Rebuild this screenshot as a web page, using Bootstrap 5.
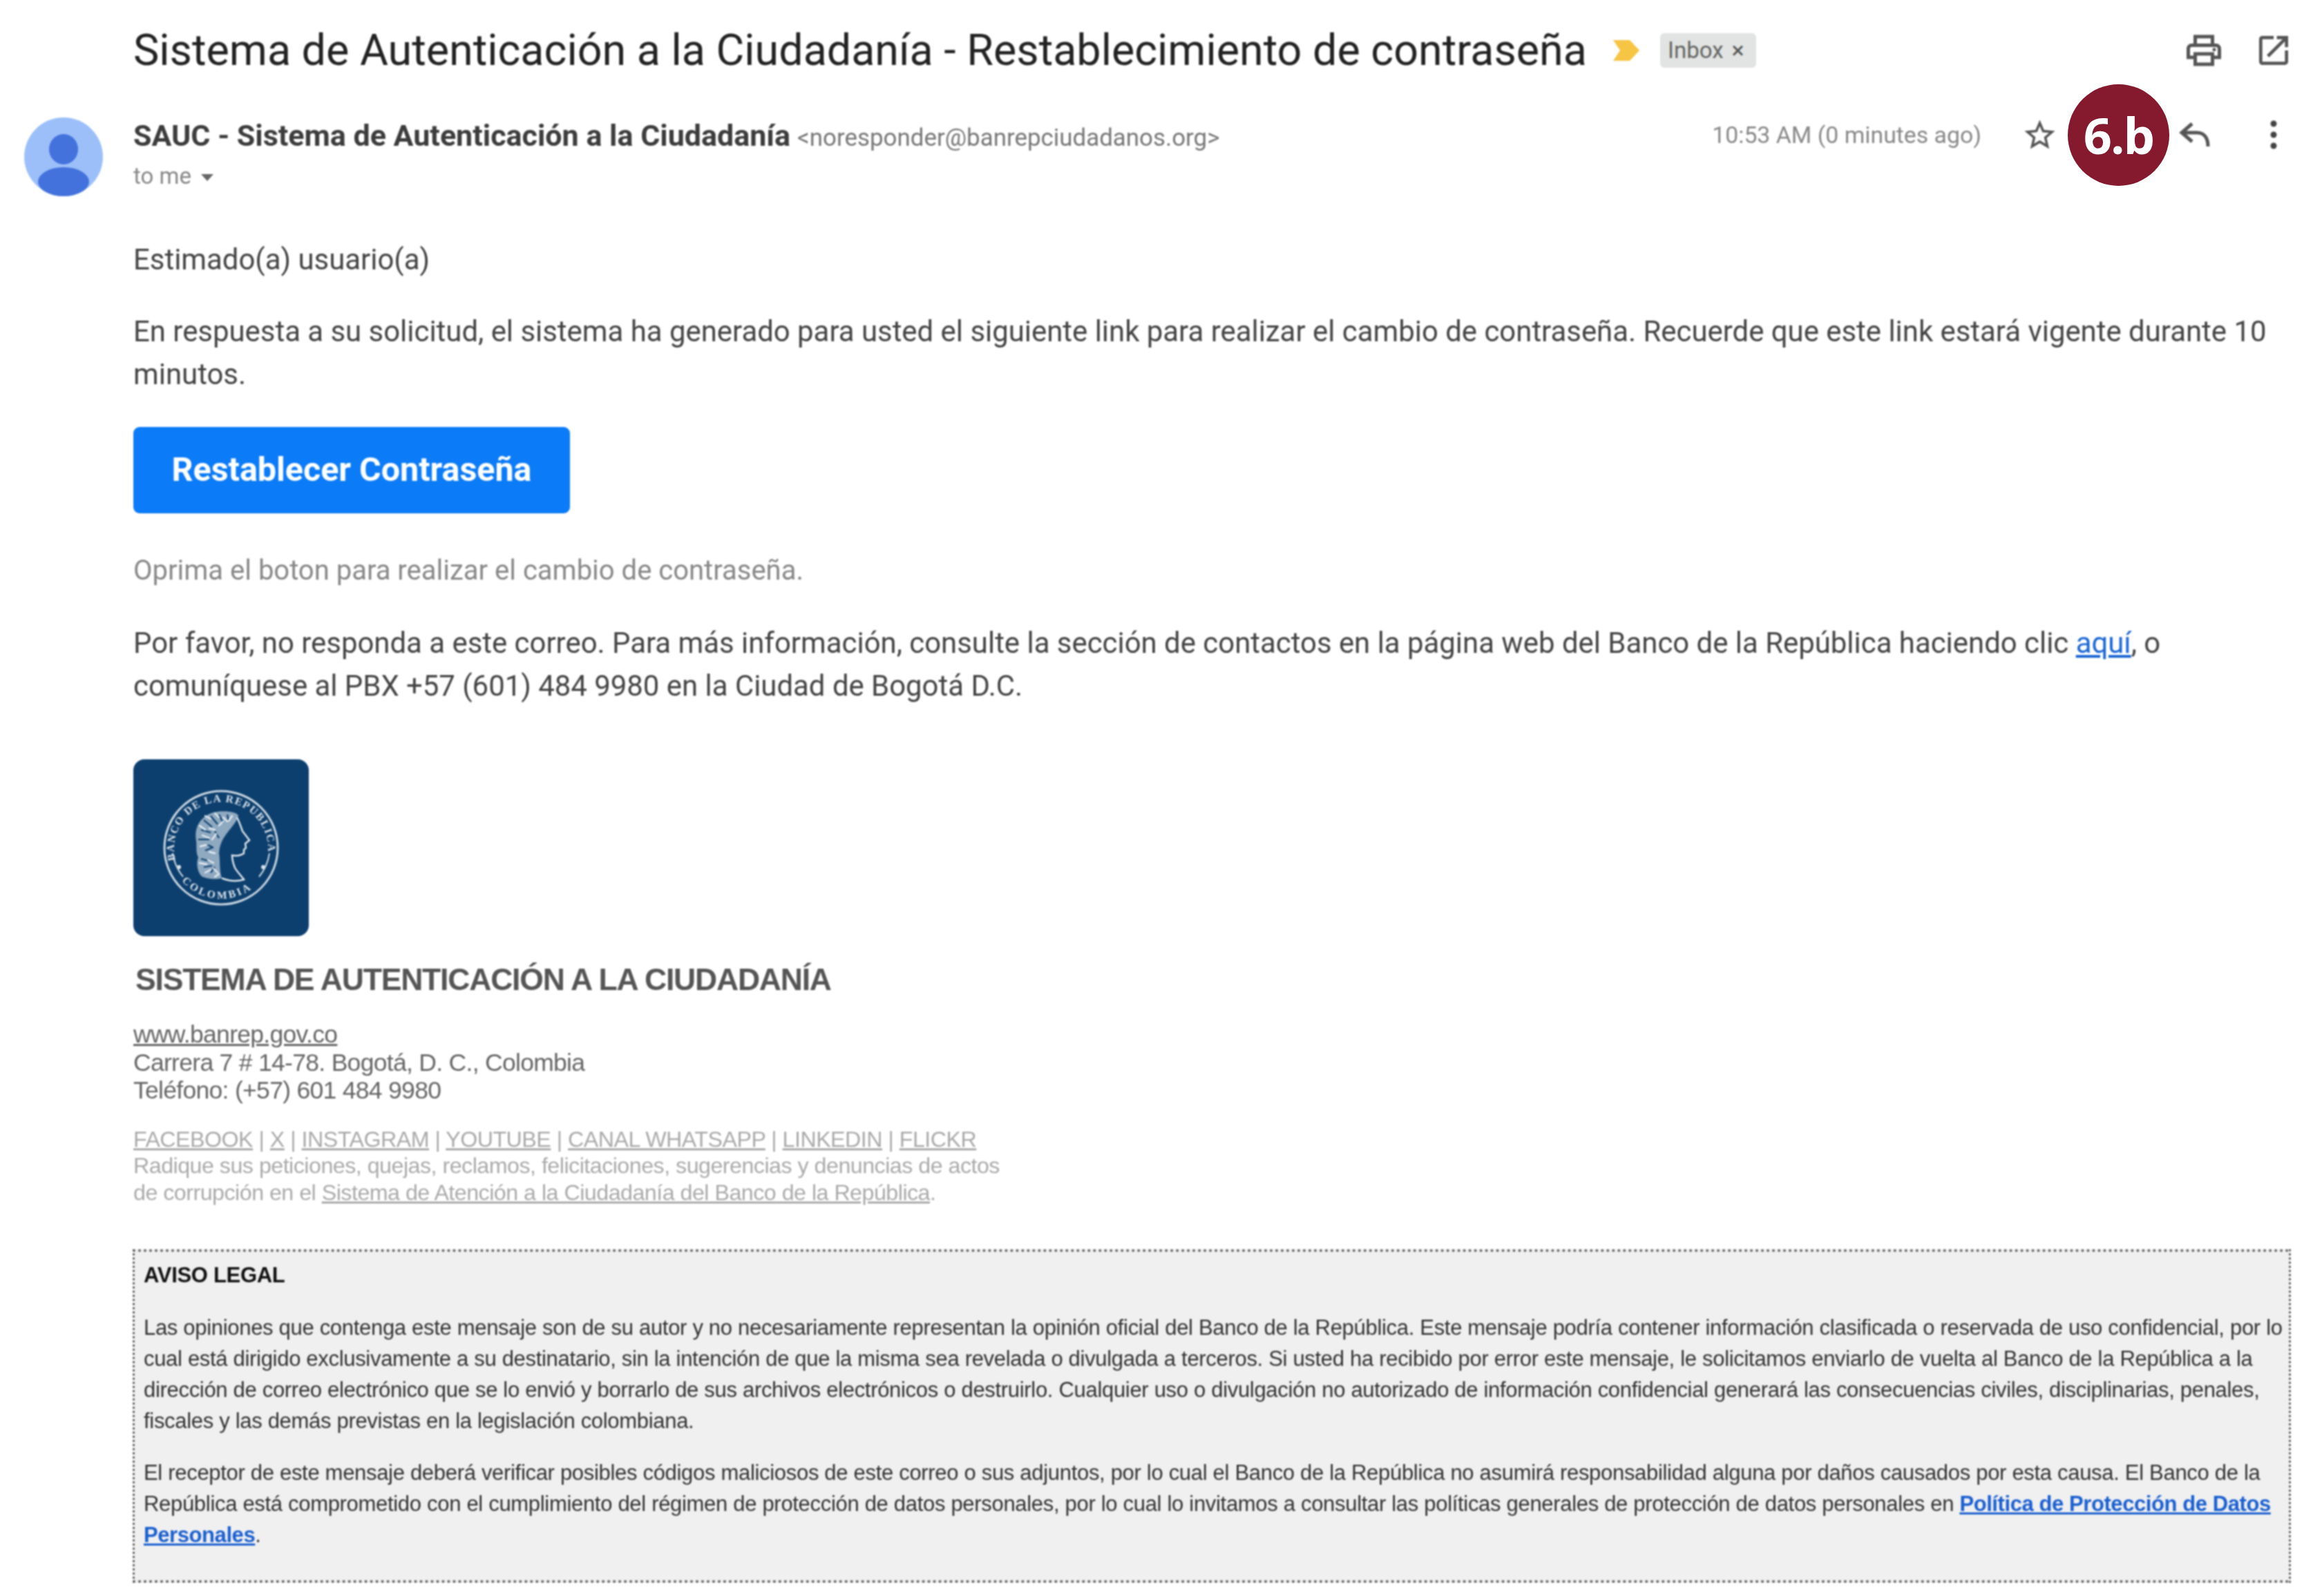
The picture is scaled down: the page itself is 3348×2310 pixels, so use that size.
<!DOCTYPE html>
<html lang="es">
<head>
<meta charset="utf-8">
<title>Sistema de Autenticación a la Ciudadanía</title>
<link href="https://cdn.jsdelivr.net/npm/bootstrap@5.3.0/dist/css/bootstrap.min.css" rel="stylesheet">
<style>
body{background:#fff;font-family:"Roboto","Liberation Sans",sans-serif;color:#444;margin:0}
.sheet{width:3348px;height:2310px;overflow:hidden}
.softened{filter:blur(1px)}
.title-row{height:145px;padding-left:193px;padding-right:29px}
.subject{font-size:62.8px;font-weight:400;color:#222;margin:0;line-height:1.2;white-space:nowrap}
.marker{margin-left:38px}
.chip-inbox{margin-left:30px;width:139px;height:50px;background:#e1e4e2;border-radius:6px;font-size:33px;color:#666;white-space:nowrap;padding-left:11px}
.chip-inbox span{font-size:34px;margin-left:12px;color:#555}
.tool-print{margin-right:43px}
.head-row{height:200px}
.avatar-col{width:193px;padding-left:34px;padding-top:24px}
.sender-col{padding-top:26px}
.sender-line{line-height:50px;white-space:nowrap}
.sender-name{font-size:43px;font-weight:700;color:#3c3c3c}
.sender-mail{font-size:34.9px;color:#777;margin-left:10px}
.to-me{font-size:33px;color:#888;line-height:50px;margin-top:-1px}
.to-me i{display:inline-block;border:9px solid transparent;border-top:10px solid #666;border-bottom:0;margin-left:14px;vertical-align:middle}
.time-col{margin-left:auto;padding-top:26px;font-size:33.8px;color:#888;line-height:50px;white-space:nowrap}
.actions{padding-top:26px;padding-right:51px}
.star-ico{margin-left:58px;margin-top:-2px}
.reply-ico{margin-left:174px}
.dots-ico{margin-left:84px}
.message{padding-left:193px;padding-right:30px}
.msg-text{font-size:41.9px;line-height:62px;margin:0 0 42px;color:#444}
.msg-muted{color:#888;margin-top:52px;margin-bottom:43px;font-size:40px}
.reset-btn{width:632px;height:125px;margin-top:45px;background:#0b7bf7;border:0;border-radius:9px;color:#fff;font-weight:700;font-size:48.4px;font-family:"Roboto",sans-serif}
.msg-link{color:#1a66d4}
.seal-box{margin-top:75px;width:254px;height:256px}
.org-name{font-family:"Liberation Sans",sans-serif;font-weight:700;font-size:44.5px;letter-spacing:-1.2px;line-height:60px;color:#555;margin:33px 0 29px 3px}
.org-data{font-family:"Liberation Sans",sans-serif;font-size:35.5px;letter-spacing:-.7px;line-height:40.5px;color:#666}
.org-data a{color:#666}
.org-links{font-family:"Liberation Sans",sans-serif;font-size:32.2px;letter-spacing:-.5px;line-height:38.5px;color:#aaa;margin-top:31px}
.org-links a{color:#aaa}
.legal-box{margin:63px 32px 0 -1px;height:483px;background:#f0f0f0;border:3px dotted #666;border-top-width:4px;border-bottom-width:4px;padding:11px 13px;font-family:"Liberation Sans",sans-serif;font-size:31px;letter-spacing:-.31px;line-height:45px;color:#333;width:3124px}
.legal-title{font-weight:700;color:#111;margin:0 0 31px;font-size:31px}
.legal-box p{margin:0 0 30px;white-space:nowrap}
.legal-box a{color:#1a5fd0;font-weight:700;letter-spacing:-.42px}
.step-badge{left:2993px;top:122px;width:147px;height:147px;background:#85192d;color:#fff;font-family:"Open Sans",sans-serif;font-weight:700;font-size:72px;letter-spacing:-2px;line-height:147px}
</style>
</head>
<body>
<div class="sheet position-relative">
 <div class="softened">
  <div class="title-row d-flex align-items-center">
   <h1 class="subject">Sistema de Autenticación a la Ciudadanía - Restablecimiento de contraseña</h1>
   <svg class="marker" width="38" height="30" viewBox="0 0 38 30"><path d="M0 0H24L38 15 24 30H0L10 15Z" fill="#f6c544"/></svg>
   <div class="chip-inbox d-flex align-items-center">Inbox<span>×</span></div>
   <div class="ms-auto d-flex align-items-center">
    <svg class="tool-print" width="60" height="60" viewBox="0 0 24 24" fill="#555"><path d="M19 8h-1V3H6v5H5c-1.66 0-3 1.34-3 3v6h4v4h12v-4h4v-6c0-1.66-1.34-3-3-3zM8 5h8v3H8V5zm8 12v2H8v-4h8v2zm2-2v-2H6v2H4v-4c0-.55.45-1 1-1h14c.55 0 1 .45 1 1v4h-2z"/><circle cx="18" cy="11.5" r="1"/></svg>
    <svg width="56" height="56" viewBox="0 0 24 24" fill="#555"><path d="M19 19H5V5h7V3H5a2 2 0 00-2 2v14a2 2 0 002 2h14c1.1 0 2-.9 2-2v-7h-2v7zM14 3v2h3.59l-9.83 9.83 1.41 1.41L19 6.41V10h2V3h-7z"/></svg>
   </div>
  </div>
  <div class="head-row d-flex">
   <div class="avatar-col flex-shrink-0">
    <svg width="116" height="116" viewBox="0 0 116 116"><circle cx="58" cy="58" r="57" fill="#9cbff9"/><ellipse cx="58" cy="47" rx="21" ry="22" fill="#4372dc"/><ellipse cx="58" cy="94" rx="37" ry="21" fill="#4372dc"/></svg>
   </div>
   <div class="sender-col">
    <div class="sender-line"><span class="sender-name">SAUC - Sistema de Autenticación a la Ciudadanía</span><span class="sender-mail">&lt;noresponder@banrepciudadanos.org&gt;</span></div>
    <div class="to-me">to me<i></i></div>
   </div>
   <div class="time-col">10:53 AM (0 minutes ago)</div>
   <div class="actions d-flex align-items-start">
    <svg class="star-ico" width="53" height="53" viewBox="0 0 24 24" fill="#555"><path d="M22 9.24l-7.19-.62L12 2 9.19 8.63 2 9.24l5.46 4.73L5.82 21 12 17.27 18.18 21l-1.63-7.03L22 9.24zM12 15.4l-3.76 2.27 1-4.28-3.32-2.88 4.38-.38L12 6.1l1.71 4.04 4.38.38-3.32 2.88 1 4.28L12 15.4z"/></svg>
    <svg class="reply-ico" width="48" height="48" viewBox="0 0 48 48" fill="none" stroke="#555" stroke-width="5"><path d="M20 8 5 21l15 13M5 21h22c10 0 16 7 16 20"/></svg>
    <svg class="dots-ico" width="12" height="48" viewBox="0 0 12 48" fill="#444"><circle cx="6" cy="8" r="4.5"/><circle cx="6" cy="24" r="4.5"/><circle cx="6" cy="40" r="4.5"/></svg>
   </div>
  </div>
  <div class="message">
   <p class="msg-text">Estimado(a) usuario(a)</p>
   <p class="msg-text mb-0">En respuesta a su solicitud, el sistema ha generado para usted el siguiente link para realizar el cambio de contraseña. Recuerde que este link estará vigente durante 10 minutos.</p>
   <button class="reset-btn d-block" type="button">Restablecer Contraseña</button>
   <p class="msg-text msg-muted">Oprima el boton para realizar el cambio de contraseña.</p>
   <p class="msg-text mb-0">Por favor, no responda a este correo. Para más información, consulte la sección de contactos en la página web del Banco de la República haciendo clic <a class="msg-link" href="#">aquí</a>, o comuníquese al PBX +57 (601) 484 9980 en la Ciudad de Bogotá D.C.</p>
   <div class="seal-box">
    <svg width="254" height="256" viewBox="0 0 254 256">
     <defs>
      <path id="arcTop" d="M61 146A68 68 0 1 1 193 146"/>
      <path id="arcBottom" d="M70 176A76 76 0 0 0 184 176"/>
     </defs>
     <rect width="254" height="256" rx="16" fill="#0d3f6e"/>
     <circle cx="127" cy="128" r="82" fill="none" stroke="#c9d6e2" stroke-width="3"/>
     <path d="M57 136A70 70 0 0 0 72 170M197 136A70 70 0 0 1 182 170" fill="none" stroke="#c9d6e2" stroke-width="2"/>
     <g fill="#dbe4ec" font-family="Liberation Serif,serif" font-weight="700">
      <text font-size="15.5" letter-spacing="1.6"><textPath href="#arcTop">BANCO DE LA REPUBLICA</textPath></text>
      <text font-size="15.5" letter-spacing="3.2"><textPath href="#arcBottom">COLOMBIA</textPath></text>
     </g>
     <circle cx="66" cy="156" r="3" fill="#dbe4ec"/><circle cx="188" cy="156" r="3" fill="#dbe4ec"/>
     <path d="M152 81C147 74 120 73 108 80 94 88 88 102 91 118 92 128 90 134 94 142 90 152 94 166 100 170 110 174 122 174 128 172 124 160 126 146 124 136 125 122 130 114 137 105 143 97 150 90 152 81Z" fill="#8fa9c0"/>
     <g stroke="#0d3f6e" stroke-width="2.2" fill="none">
      <path d="M102 88l12 10M112 82l10 12M124 80l6 12M136 80l2 10M98 102l14 4M94 116l16 0M118 104l6 10M108 124l8 4M98 144l14 4M102 156l12-2M112 164l6-8M104 132l10-4"/>
     </g>
     <g stroke="#e6edf3" stroke-width="2.4" fill="none" stroke-linecap="round">
      <path d="M104 82l8 4M118 78l6 6M130 84l6 6M143 82l-5 7M96 96l8 6M110 100l8 2M124 96l6-6M100 110l10 4M114 116l6-8M97 126l8-2M110 134l8 2M96 150l10 2M108 146l8 4M104 164l8-4M116 158l6 6M118 170l6-4"/>
     </g>
     <path d="M150 84C154 92 156 98 158 104L168 117 162 122 163 128 160 131 160 136C155 140 150 140 143 139 143 146 145 152 147 157 151 164 156 168 160 174 150 177 138 176 128 172" fill="none" stroke="#dbe4ec" stroke-width="2.5"/>
    </svg>
   </div>
   <div class="org-name">SISTEMA DE AUTENTICACIÓN A LA CIUDADANÍA</div>
   <div class="org-data"><a href="#">www.banrep.gov.co</a><br>Carrera 7 # 14-78. Bogotá, D. C., Colombia<br>Teléfono: (+57) 601 484 9980</div>
   <div class="org-links"><a href="#">FACEBOOK</a> | <a href="#">X</a> | <a href="#">INSTAGRAM</a> | <a href="#">YOUTUBE</a> | <a href="#">CANAL WHATSAPP</a> | <a href="#">LINKEDIN</a> | <a href="#">FLICKR</a><br>Radique sus peticiones, quejas, reclamos, felicitaciones, sugerencias y denuncias de actos<br>de corrupción en el <a href="#">Sistema de Atención a la Ciudadanía del Banco de la República</a>.</div>
   <div class="legal-box">
    <div class="legal-title">AVISO LEGAL</div>
    <p>Las opiniones que contenga este mensaje son de su autor y no necesariamente representan la opinión oficial del Banco de la República. Este mensaje podría contener información clasificada o reservada de uso confidencial, por lo<br>cual está dirigido exclusivamente a su destinatario, sin la intención de que la misma sea revelada o divulgada a terceros. Si usted ha recibido por error este mensaje, le solicitamos enviarlo de vuelta al Banco de la República a la<br>dirección de correo electrónico que se lo envió y borrarlo de sus archivos electrónicos o destruirlo. Cualquier uso o divulgación no autorizado de información confidencial generará las consecuencias civiles, disciplinarias, penales,<br>fiscales y las demás previstas en la legislación colombiana.</p>
    <p class="mb-0">El receptor de este mensaje deberá verificar posibles códigos maliciosos de este correo o sus adjuntos, por lo cual el Banco de la República no asumirá responsabilidad alguna por daños causados por esta causa. El Banco de la<br>República está comprometido con el cumplimiento del régimen de protección de datos personales, por lo cual lo invitamos a consultar las políticas generales de protección de datos personales en <a href="#">Política de Protección de Datos<br>Personales</a>.</p>
   </div>
  </div>
 </div>
 <div class="step-badge position-absolute rounded-circle text-center">6.b</div>
</div>
<script src="https://cdn.jsdelivr.net/npm/bootstrap@5.3.0/dist/js/bootstrap.bundle.min.js"></script>
</body>
</html>
